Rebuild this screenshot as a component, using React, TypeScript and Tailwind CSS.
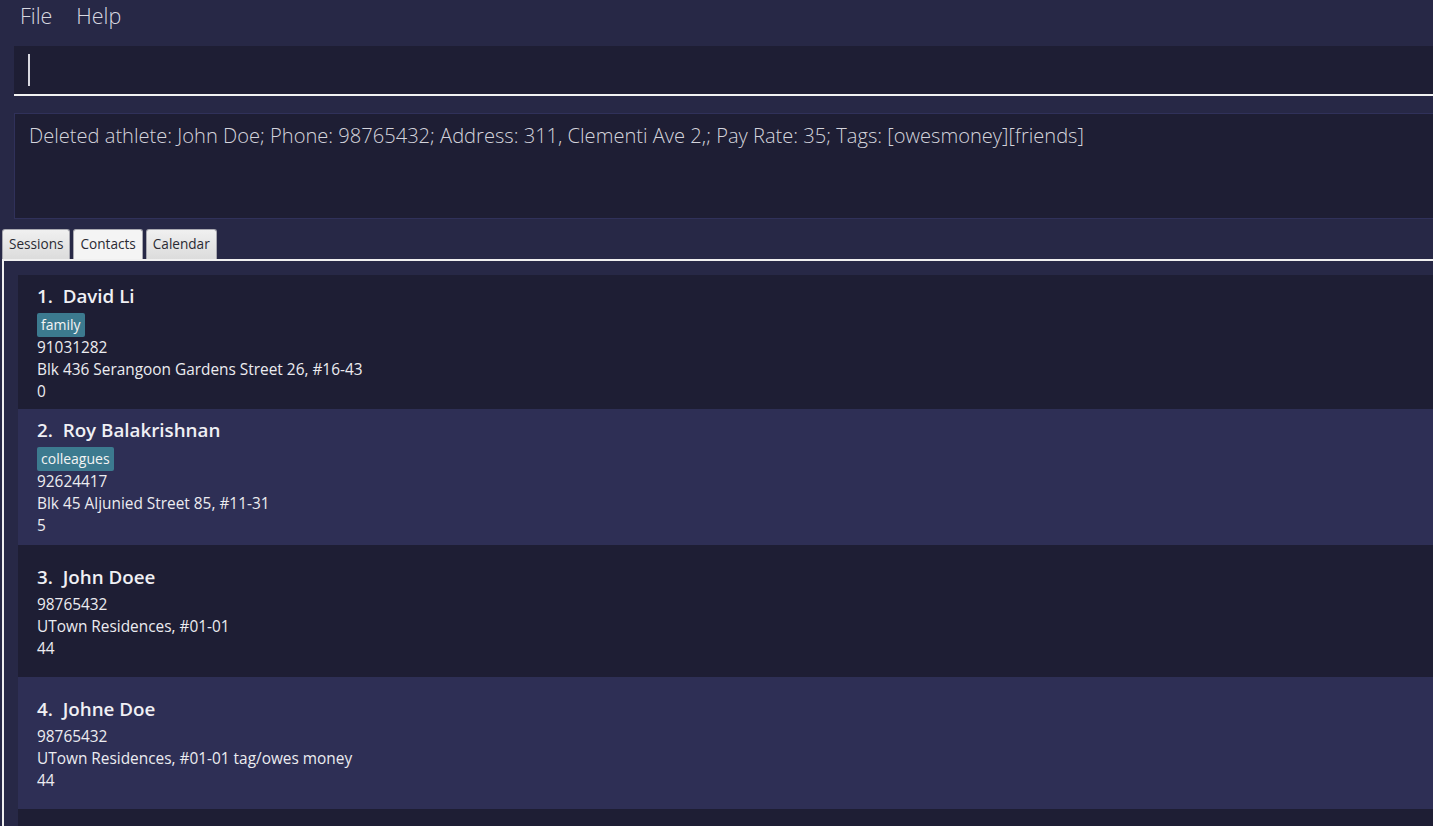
import React from 'react';

interface Athlete {
  name: string;
  tags: string[];
  phone: string;
  address: string;
  payRate: string;
  height: string;
}

const athletes: Athlete[] = [
  {
    name: 'David Li',
    tags: ['family'],
    phone: '91031282',
    address: 'Blk 436 Serangoon Gardens Street 26, #16-43',
    payRate: '0',
    height: 'h-[134px]',
  },
  {
    name: 'Roy Balakrishnan',
    tags: ['colleagues'],
    phone: '92624417',
    address: 'Blk 45 Aljunied Street 85, #11-31',
    payRate: '5',
    height: 'h-[136px]',
  },
  {
    name: 'John Doee',
    tags: [],
    phone: '98765432',
    address: 'UTown Residences, #01-01',
    payRate: '44',
    height: 'h-[132px]',
  },
  {
    name: 'Johne Doe',
    tags: [],
    phone: '98765432',
    address: 'UTown Residences, #01-01 tag/owes money',
    payRate: '44',
    height: 'h-[132px]',
  },
];

const tabs = ['Sessions', 'Contacts', 'Calendar'];

const AthleteCard: React.FC<{ athlete: Athlete; index: number }> = ({
  athlete,
  index,
}) => {
  const shade = index % 2 === 0 ? 'bg-[#1e1e34]' : 'bg-[#2e2f55]';
  const hasTags = athlete.tags.length > 0;
  return (
    <div
      className={`${shade} ${athlete.height} shrink-0 flex flex-col pl-[19px] text-[15.4px] leading-[22px] text-[#ececf0] ${
        hasTags ? 'pt-[9px]' : 'pt-[20px]'
      }`}
    >
      <div className="text-[18.8px] font-semibold leading-[24px] text-[#f0f0f4] mb-[5px]">
        {index + 1}.&nbsp;&nbsp;{athlete.name}
      </div>
      {hasTags && (
        <div className="flex gap-1">
          {athlete.tags.map((tag) => (
            <span
              key={tag}
              className="bg-[#3c7a8f] rounded-[2px] px-[4px] h-[24px] leading-[24px] text-[14px] text-[#f4f4f4]"
            >
              {tag}
            </span>
          ))}
        </div>
      )}
      <div>{athlete.phone}</div>
      <div>{athlete.address}</div>
      <div>{athlete.payRate}</div>
    </div>
  );
};

export default function App() {
  return (
    <div className="h-[826px] w-full overflow-hidden bg-[#272846] font-['Open_Sans',sans-serif]">
      <div className="h-[33px] flex items-center gap-[24px] pl-[20px] text-[21.5px] font-light text-[#d8d8e0]">
        <span>File</span>
        <span>Help</span>
      </div>

      <div className="pl-[14px] pt-[13px]">
        <div className="h-[50px] bg-[#1e1e34] border-b-2 border-[#f2f2f2] flex items-center pl-[14px]">
          <div className="w-[2px] h-[32px] bg-[#d8d8e0]" />
        </div>
      </div>

      <div className="pl-[14px] pt-[17px]">
        <div className="h-[106px] bg-[#1e1e34] border border-r-0 border-[#30315a] pl-[14px] pt-[7px] text-[20.1px] font-light text-[#d4d4dc]">
          Deleted athlete: John Doe; Phone: 98765432; Address: 311, Clementi Ave 2,; Pay Rate: 35; Tags: [owesmoney][friends]
        </div>
      </div>

      <div className="flex items-end gap-[3px] pl-[2px] pt-[10px] h-[40px]">
        {tabs.map((tab) => (
          <div
            key={tab}
            className={`h-[30px] px-[6px] flex items-center rounded-t-[3px] border border-b-0 border-[#a8a8b0] text-[13.6px] text-[#2a2a33] ${
              tab === 'Contacts'
                ? 'bg-[#f4f4f4]'
                : 'bg-gradient-to-b from-[#f0f0f0] to-[#dcdcdc]'
            }`}
          >
            {tab}
          </div>
        ))}
      </div>

      <div className="ml-[2px] border-t-2 border-l-2 border-[#f0f0f0] pt-[14px] pl-[14px] flex flex-col">
        {athletes.map((athlete, i) => (
          <AthleteCard key={i} athlete={athlete} index={i} />
        ))}
        {/* next cell, scrolled below the fold */}
        <div className="h-[132px] shrink-0 bg-[#1e1e34]" />
      </div>
    </div>
  );
}
